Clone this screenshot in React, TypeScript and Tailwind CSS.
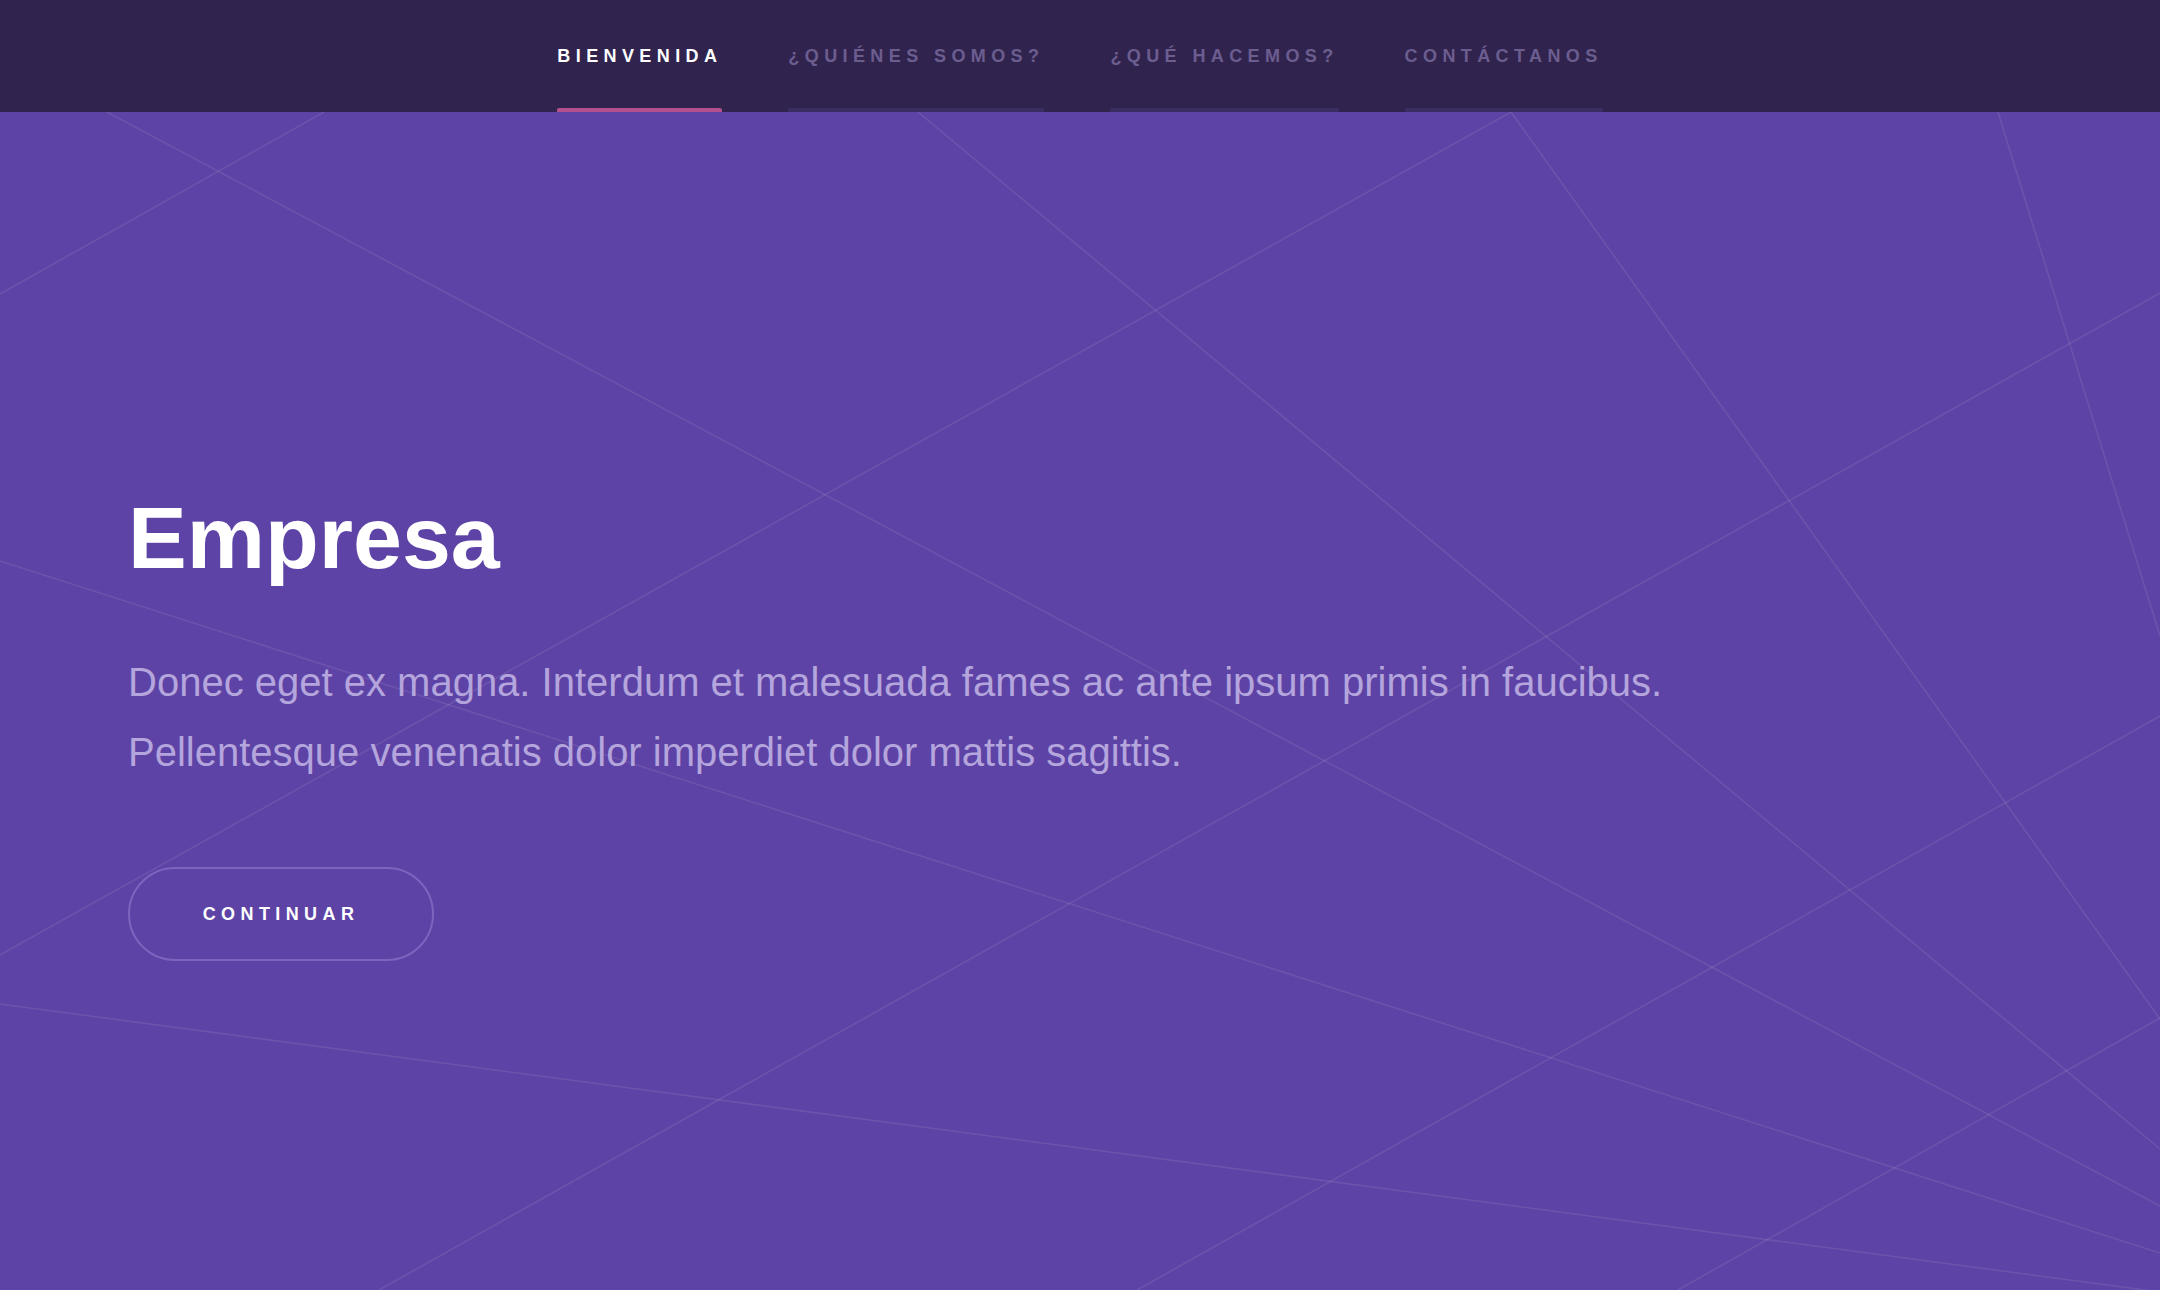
export default function App() {
  const navItems = [
    { label: "Bienvenida", active: true },
    { label: "¿Quiénes somos?", active: false },
    { label: "¿Qué hacemos?", active: false },
    { label: "Contáctanos", active: false },
  ];

  // decorative background lines, in hero coordinates (2160 x 1178)
  const lines = [
    [107, 0, 2160, 1094],
    [324, 0, 0, 182],
    [918, 0, 2160, 1037],
    [1511, 0, 0, 843],
    [1511, 0, 2160, 907],
    [1998, 0, 2160, 524],
    [2160, 181, 379, 1178],
    [0, 449, 2160, 1141],
    [0, 892, 2160, 1180],
    [2160, 604, 1137, 1178],
    [2160, 906, 1678, 1178],
  ];

  return (
    <div className="w-full bg-[#5d43a5] font-['Liberation_Sans',Arial,sans-serif]">
      <nav className="h-[112px] bg-[#30244f] flex justify-center gap-[66px]">
        {navItems.map((item) => (
          <a
            key={item.label}
            href="#"
            className="relative h-full flex items-center"
          >
            <span
              className={`text-[18px] font-bold uppercase tracking-[0.3em] ${
                item.active ? "text-white" : "text-[#6c5d8f]"
              }`}
            >
              {item.label}
            </span>
            <span
              className={`absolute left-0 right-0 bottom-0 h-[4px] rounded-t-[2px] ${
                item.active ? "bg-[#b5508f]" : "bg-[#3a2d62]"
              }`}
            ></span>
          </a>
        ))}
      </nav>

      <section className="relative h-[1178px] overflow-hidden bg-[#5d43a5]">
        <svg
          className="absolute inset-0 w-full h-full"
          viewBox="0 0 2160 1178"
          preserveAspectRatio="none"
        >
          {lines.map(([x1, y1, x2, y2], i) => (
            <line
              key={i}
              x1={x1}
              y1={y1}
              x2={x2}
              y2={y2}
              stroke="rgba(255,255,255,0.09)"
              strokeWidth="1.6"
            />
          ))}
        </svg>

        <div className="relative flex flex-col items-start px-[128px] pt-[382px]">
          <h1 className="text-[88px] font-bold leading-none text-white">
            Empresa
          </h1>
          <p className="mt-[65px] max-w-[1640px] text-[40px] leading-[70px] text-[#b4a5dc]">
            Donec eget ex magna. Interdum et malesuada fames ac ante ipsum
            primis in faucibus. Pellentesque venenatis dolor imperdiet dolor
            mattis sagittis.
          </p>
          <button className="mt-[80px] w-[306px] h-[94px] rounded-full border-2 border-[#7b65bf] text-[18px] font-bold uppercase tracking-[0.3em] text-white">
            Continuar
          </button>
        </div>
      </section>
    </div>
  );
}
